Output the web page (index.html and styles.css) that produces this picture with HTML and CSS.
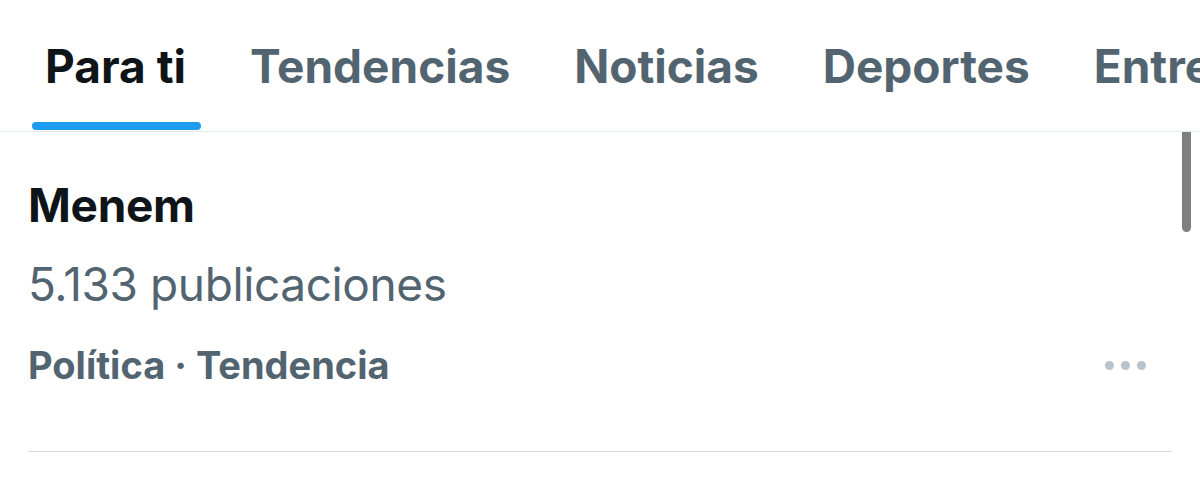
FILE: index.html
```html
<!DOCTYPE html>
<html>
<head>
    <title>Explorar</title>
    <link rel="stylesheet" href="styles.css">
</head>
<body>
    <nav class="tabs">
        <a class="tab active"><span class="tab-label">Para ti</span><span class="tab-bar"></span></a>
        <a class="tab"><span class="tab-label">Tendencias</span><span class="tab-bar"></span></a>
        <a class="tab"><span class="tab-label">Noticias</span><span class="tab-bar"></span></a>
        <a class="tab"><span class="tab-label">Deportes</span><span class="tab-bar"></span></a>
        <a class="tab"><span class="tab-label">Entretenimiento</span><span class="tab-bar"></span></a>
    </nav>

    <div class="scroll-thumb"></div>

    <section class="trend-list">
        <div class="trend">
            <div class="trend-name">Menem</div>
            <div class="trend-count">5.133 publicaciones</div>
            <div class="trend-meta">
                <span>Política · Tendencia</span>
                <span class="more">
                    <i></i><i></i><i></i>
                </span>
            </div>
        </div>
    </section>
</body>
</html>
```

FILE: styles.css
```css
body {
    margin: 0;
    font-family: Inter, "Liberation Sans", Arial, sans-serif;
    background: #fff;
    color: #0f1419;
    overflow: hidden;
    width: 1200px;
    height: 490px;
}
.tabs {
    display: flex;
    height: 131px;
    border-bottom: 1px solid #e3e8eb;
    padding-left: 32px;
    gap: 36px;
    white-space: nowrap;
    overflow: hidden;
}
.tab {
    display: flex;
    flex-direction: column;
    align-items: stretch;
    padding-top: 38px;
    flex-shrink: 0;
}
.tab-label {
    padding: 0 15px 0 13px;
    font-size: 46px;
    line-height: 56px;
    font-weight: 700;
    color: #536471;
}
.tab-bar {
    margin-top: auto;
    margin-bottom: 1px;
    height: 8px;
    border-radius: 4px;
}
.tab.active .tab-label {
    color: #0f1419;
}
.tab.active .tab-bar {
    background: #1d9bf0;
}
.scroll-thumb {
    position: absolute;
    left: 1182px;
    top: 132px;
    width: 9px;
    height: 100px;
    background: #7f7f7f;
    border-radius: 0 0 5px 5px;
}
.trend-list {
    padding: 0 28px;
}
.trend {
    padding: 45px 0 62px;
    border-bottom: 1px solid #d3d7db;
}
.trend-name {
    font-size: 46px;
    line-height: 56px;
    font-weight: 700;
    letter-spacing: -0.3px;
}
.trend-count {
    margin-top: 23px;
    font-size: 46px;
    line-height: 56px;
    letter-spacing: -0.4px;
    color: #536471;
}
.trend-meta {
    margin-top: 29px;
    display: flex;
    justify-content: space-between;
    align-items: center;
    font-size: 38px;
    line-height: 48px;
    font-weight: 700;
    color: #536471;
}
.more {
    display: flex;
    gap: 7px;
    margin-right: 26px;
}
.more i {
    width: 9px;
    height: 9px;
    border-radius: 50%;
    background: #b8c4cd;
}
```
